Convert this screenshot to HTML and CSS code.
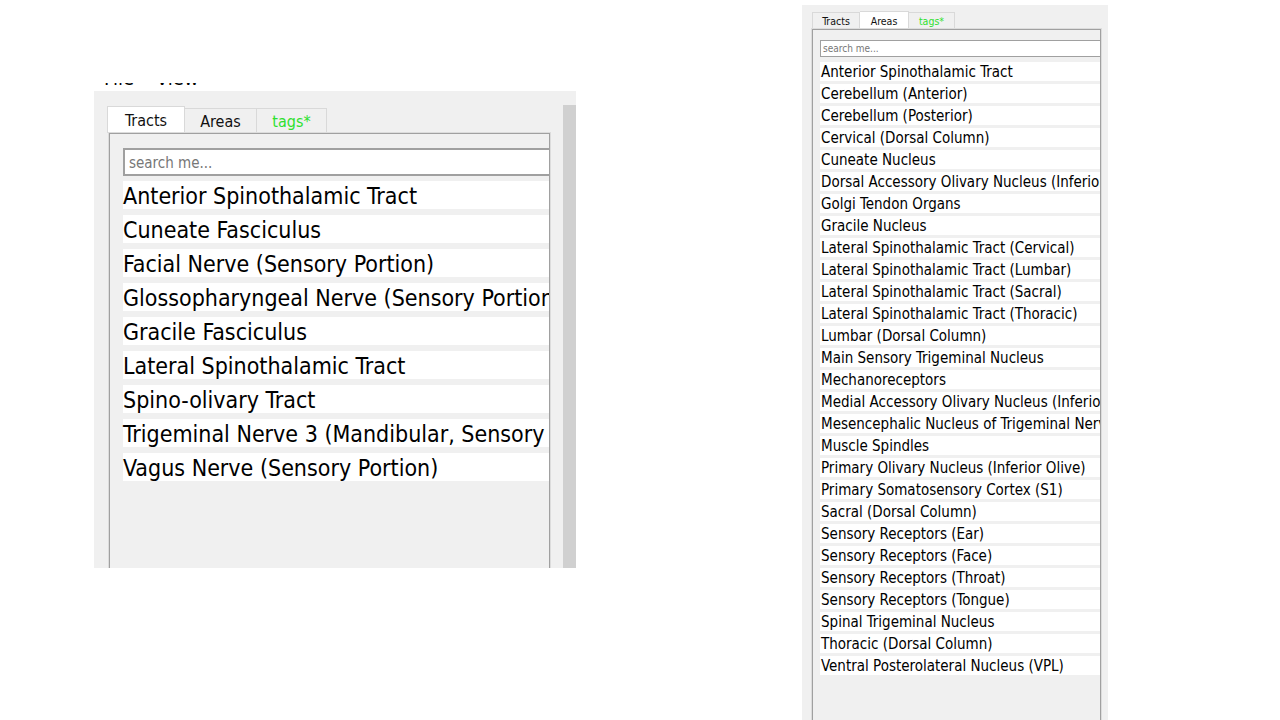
FILE: index.html
```html
<!DOCTYPE html>
<html>
<head>
<meta charset="utf-8">
<link rel="stylesheet" href="styles.css">
</head>
<body>
<div class="col-left">
  <div class="menu"><div class="menu-text"><span>File</span><span>View</span></div></div>
  <div class="panel lg">
    <div class="main">
      <div class="tabs">
        <div class="tab active">Tracts</div>
        <div class="tab">Areas</div>
        <div class="tab tags">tags*</div>
      </div>
      <div class="frame">
        <div class="inner">
          <div class="search">search me...</div>
          <div class="list">
            <div class="item">Anterior Spinothalamic Tract</div>
            <div class="item">Cuneate Fasciculus</div>
            <div class="item">Facial Nerve (Sensory Portion)</div>
            <div class="item">Glossopharyngeal Nerve (Sensory Portion)</div>
            <div class="item">Gracile Fasciculus</div>
            <div class="item">Lateral Spinothalamic Tract</div>
            <div class="item">Spino-olivary Tract</div>
            <div class="item">Trigeminal Nerve 3 (Mandibular, Sensory Portion)</div>
            <div class="item">Vagus Nerve (Sensory Portion)</div>
          </div>
        </div>
      </div>
    </div>
    <div class="scroll"></div>
  </div>
</div>

<div class="panel sm">
  <div class="main">
    <div class="tabs">
      <div class="tab">Tracts</div>
      <div class="tab active">Areas</div>
      <div class="tab tags">tags*</div>
    </div>
    <div class="frame">
      <div class="inner">
        <div class="search">search me...</div>
        <div class="list">
          <div class="item">Anterior Spinothalamic Tract</div>
          <div class="item">Cerebellum (Anterior)</div>
          <div class="item">Cerebellum (Posterior)</div>
          <div class="item">Cervical (Dorsal Column)</div>
          <div class="item">Cuneate Nucleus</div>
          <div class="item">Dorsal Accessory Olivary Nucleus (Inferior Olive)</div>
          <div class="item">Golgi Tendon Organs</div>
          <div class="item">Gracile Nucleus</div>
          <div class="item">Lateral Spinothalamic Tract (Cervical)</div>
          <div class="item">Lateral Spinothalamic Tract (Lumbar)</div>
          <div class="item">Lateral Spinothalamic Tract (Sacral)</div>
          <div class="item">Lateral Spinothalamic Tract (Thoracic)</div>
          <div class="item">Lumbar (Dorsal Column)</div>
          <div class="item">Main Sensory Trigeminal Nucleus</div>
          <div class="item">Mechanoreceptors</div>
          <div class="item">Medial Accessory Olivary Nucleus (Inferior Olive)</div>
          <div class="item">Mesencephalic Nucleus of Trigeminal Nerve</div>
          <div class="item">Muscle Spindles</div>
          <div class="item">Primary Olivary Nucleus (Inferior Olive)</div>
          <div class="item">Primary Somatosensory Cortex (S1)</div>
          <div class="item">Sacral (Dorsal Column)</div>
          <div class="item">Sensory Receptors (Ear)</div>
          <div class="item">Sensory Receptors (Face)</div>
          <div class="item">Sensory Receptors (Throat)</div>
          <div class="item">Sensory Receptors (Tongue)</div>
          <div class="item">Spinal Trigeminal Nucleus</div>
          <div class="item">Thoracic (Dorsal Column)</div>
          <div class="item">Ventral Posterolateral Nucleus (VPL)</div>
        </div>
      </div>
    </div>
  </div>
</div>
</body>
</html>
```
FILE: styles.css
```css
html, body {
  margin: 0;
  padding: 0;
  background: #ffffff;
}
body {
  width: 1280px;
  height: 720px;
  overflow: hidden;
  display: flex;
  align-items: flex-start;
  font-family: "DejaVu Sans Condensed", "DejaVu Sans", sans-serif;
  color: #000;
}

.col-left {
  margin-left: 94px;
  margin-top: 83px;
  display: flex;
  flex-direction: column;
}

.menu {
  height: 8px;
  overflow: hidden;
  padding-left: 10px;
}
.menu-text {
  display: flex;
  gap: 22px;
  font-size: 20px;
  line-height: 20px;
  margin-top: -15.5px;
  color: #000;
}

.panel {
  background: #f0f0f0;
  display: flex;
  overflow: hidden;
}
.panel .main {
  display: flex;
  flex-direction: column;
  flex: 1;
  min-width: 0;
}
.tabs {
  display: flex;
  align-items: flex-end;
}
.tab {
  box-sizing: border-box;
  border: 1px solid #d9d9d9;
  border-bottom: none;
  background: #f0f0f0;
  text-align: center;
  color: #111;
}
.tab.active {
  background: #ffffff;
}
.tab + .tab {
  border-left: none;
}
.tab.tags {
  color: #2ee02e;
}
.frame {
  box-sizing: border-box;
  border: 1px solid #a0a0a0;
  box-shadow: 0 0 0 1px #dcdcdc;
  border-bottom: none;
  overflow: hidden;
  flex: none;
}
.inner {
  width: 900px;
}
.search {
  box-sizing: border-box;
  background: #fff;
  border: 1px solid #a0a0a0;
  color: #777;
}
.list {
  display: flex;
  flex-direction: column;
}
.item {
  box-sizing: border-box;
  background: #fff;
  white-space: nowrap;
  color: #000;
}

/* large panel */
.panel.lg {
  width: 482px;
  height: 477px;
}
.lg .main {
  padding: 15px 0 0 13px;
}
.lg .tabs {
  height: 27px;
}
.lg .tab {
  height: 25px;
  font-size: 16px;
  line-height: 25px;
}
.lg .tab.active {
  height: 27px;
  line-height: 27px;
}
.lg .tab:nth-child(1) { width: 78px; }
.lg .tab:nth-child(2) { width: 72px; }
.lg .tab:nth-child(3) { width: 70px; }
.lg .frame {
  margin-left: 2px;
  width: 441px;
  height: 450px;
  padding: 14px 0 0 13px;
}
.lg .search {
  width: 460px;
  height: 28px;
  border-width: 2px;
  font-size: 15px;
  line-height: 26px;
  padding-left: 4px;
}
.lg .list {
  margin-top: 5px;
  gap: 6px;
}
.lg .item {
  width: 426px;
  height: 28px;
  font-size: 23px;
  line-height: 28px;
  padding-top: 1px;
}
.lg .scroll {
  width: 13px;
  margin-top: 14px;
  margin-left: 13px;
  background: #d0d0d0;
}

/* small panel */
.panel.sm {
  width: 306px;
  height: 715px;
  margin-left: 226px;
  margin-top: 5px;
}
.sm .main {
  padding: 6px 0 0 10px;
}
.sm .tabs {
  height: 18px;
}
.sm .tab {
  height: 17px;
  font-size: 10.5px;
  line-height: 17px;
}
.sm .tab.active {
  height: 18px;
  line-height: 18px;
}
.sm .tab:nth-child(1) { width: 48px; }
.sm .tab:nth-child(2) { width: 49px; }
.sm .tab:nth-child(3) { width: 46px; }
.sm .frame {
  width: 289px;
  height: 700px;
  padding: 10px 0 0 7px;
}
.sm .search {
  width: 400px;
  height: 17px;
  font-size: 10px;
  line-height: 15px;
  padding-left: 2px;
}
.sm .list {
  margin-top: 5px;
  gap: 3px;
}
.sm .item {
  width: 280px;
  height: 19px;
  font-size: 15px;
  line-height: 19px;
  padding-left: 1px;
  padding-top: 1px;
  overflow: hidden;
}
```
